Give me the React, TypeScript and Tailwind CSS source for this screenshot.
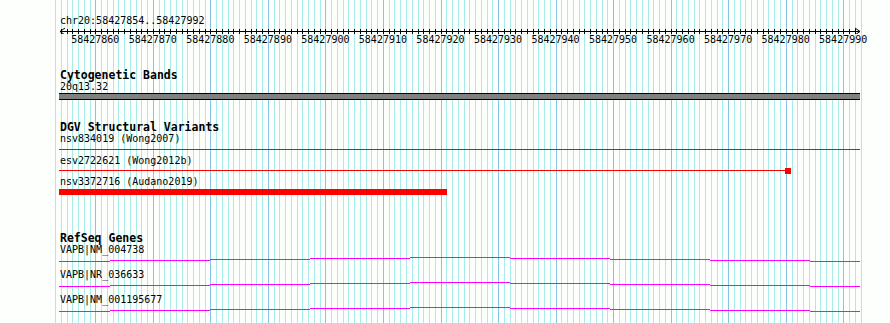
import React from 'react';

const PX_PER_BP = 5.754;
const GRID_LEFT = 55;

const gridLines = Array.from({ length: 141 }, (_, k) => ({
  x: Math.round(GRID_LEFT + k * PX_PER_BP),
  major: (k - 7) % 10 === 0,
}));

const rulerLabels = Array.from({ length: 14 }, (_, i) => 58427860 + i * 10);

// stair-stepped gene line, one segment per 100px
const GENE_SEGMENTS = [
  'w-[51px] mt-[4px]',
  'w-[100px] mt-[3px]',
  'w-[100px] mt-[2px]',
  'w-[100px] mt-[1px]',
  'w-[100px] mt-0',
  'w-[100px] mt-[1px]',
  'w-[100px] mt-[2px]',
  'w-[100px] mt-[3px]',
  'w-[50px] mt-[4px]',
];

function GridLines() {
  return (
    <svg className="absolute inset-0" width={890} height={323} shapeRendering="crispEdges">
      {gridLines.map((g) => (
        <rect key={g.x} x={g.x} y={0} width={1} height={323} fill={g.major ? '#87c3e6' : '#a7ebeb'} />
      ))}
    </svg>
  );
}

function Ruler() {
  const ticks = gridLines.filter((g) => g.x >= 60 && g.x <= 860);
  return (
    <svg className="block" width={890} height={7} shapeRendering="crispEdges">
      <rect x={60} y={4} width={800} height={1} fill="#000" />
      {ticks.map((t) => (
        <rect key={t.x} x={t.x} y={2} width={1} height={5} fill="#000" />
      ))}
      <polyline points="65,1 60,4.5 65,8" fill="none" stroke="#000" strokeWidth={1} shapeRendering="auto" />
      <polyline points="855,1 860,4.5 855,8" fill="none" stroke="#000" strokeWidth={1} shapeRendering="auto" />
    </svg>
  );
}

function TrackTitle({ children, className = '' }: { children: React.ReactNode; className?: string }) {
  return <div className={`ml-[60px] h-[11px] text-[11.5px] leading-[11px] font-bold ${className}`}>{children}</div>;
}

function Label({ children, className = '' }: { children: React.ReactNode; className?: string }) {
  return <div className={`ml-[60px] h-[12px] ${className}`}>{children}</div>;
}

function GeneLine({ className = '' }: { className?: string }) {
  return (
    <div className={`ml-[59px] flex h-[5px] ${className}`}>
      {GENE_SEGMENTS.map((cls, i) => (
        <div key={i} className={`${cls} h-px bg-[#ff00ff]`} />
      ))}
    </div>
  );
}

export default function App() {
  return (
    <div className="relative w-[890px] h-[323px] overflow-hidden bg-[#fdfffd] font-['DejaVu_Sans_Mono',monospace] text-[10px] leading-[12px] text-black">
      <GridLines />

      <div className="relative flex flex-col pt-[15px]">
        {/* ruler */}
        <Label>chr20:58427854..58427992</Label>
        <Ruler />
        <div className="flex h-[12px] ml-[66.5px]">
          {rulerLabels.map((n) => (
            <div key={n} className="w-[57.54px] shrink-0 text-center">
              {n}
            </div>
          ))}
        </div>

        {/* cytogenetic bands */}
        <TrackTitle className="mt-[24px]">Cytogenetic Bands</TrackTitle>
        <Label>20q13.32</Label>
        <div className="ml-[59px] w-[801px] h-[7px] border-y border-black bg-[#808080]" />

        {/* DGV */}
        <TrackTitle className="mt-[22px]">DGV Structural Variants</TrackTitle>
        <Label>nsv834019 (Wong2007)</Label>
        <div className="ml-[59px] mt-[4px] w-[801px] h-px bg-[#ff0000]" />

        <Label className="mt-[5px]">esv2722621 (Wong2012b)</Label>
        <div className="ml-[59px] mt-[1px] flex h-[6px]">
          <div className="mt-[2px] w-[726px] h-px bg-[#ff0000]" />
          <div className="w-[6px] h-[6px] bg-[#ff0000]" />
        </div>

        <Label className="mt-[2px]">nsv3372716 (Audano2019)</Label>
        <div className="ml-[59px] mt-[1px] w-[388px] h-[6px] bg-[#ff0000]" />

        {/* RefSeq */}
        <TrackTitle className="mt-[38px]">RefSeq Genes</TrackTitle>
        <Label>VAPB|NM_004738</Label>
        <GeneLine className="mt-[1px]" />
        <Label className="mt-[7px]">VAPB|NR_036633</Label>
        <GeneLine className="mt-[1px]" />
        <Label className="mt-[7px]">VAPB|NM_001195677</Label>
        <GeneLine className="mt-[1px]" />
      </div>
    </div>
  );
}
